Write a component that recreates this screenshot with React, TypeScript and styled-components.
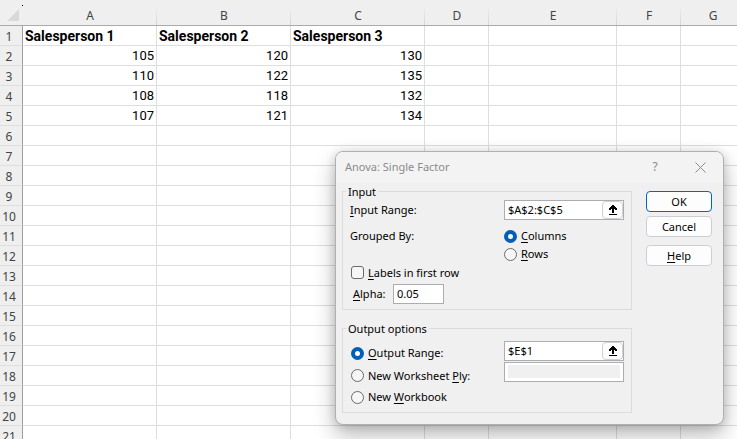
import React, { useState } from "react";
import styled, { createGlobalStyle } from "styled-components";

const GlobalStyle = createGlobalStyle`
  * { box-sizing: border-box; }
  html, body, #root { height: 100%; }
  body { margin: 0; background: #fff; overflow: hidden; }
`;

const UI_FONT = '"Noto Sans", "Open Sans", sans-serif';

const Workbook = styled.main`
  position: relative;
  height: 100%;
  overflow: hidden;
  background: #fff;
`;

const Sheet = styled.table`
  table-layout: fixed;
  width: max-content;
  border-collapse: separate;
  border-spacing: 0;
`;

const Column = styled.col<{ $width: number }>`
  width: ${(p) => p.$width}px;
`;

const Corner = styled.td`
  height: 26px;
  padding: 0 3px 3px 0;
  background: #efefef;
  border-bottom: 1px solid #ababab;
  vertical-align: bottom;
  text-align: right;

  svg { display: block; margin-left: auto; overflow: visible; }
`;

const ColumnHeader = styled.th`
  height: 26px;
  padding: 6px 0 0;
  background: linear-gradient(#efefef, #d4d4d4) right bottom / 1px 18px no-repeat #efefef;
  border-bottom: 1px solid #ababab;
  color: #444;
  font: 400 12px/18px ${UI_FONT};
  text-align: center;
`;

const RowHeader = styled.th`
  height: 20px;
  padding: 2px 4px 0 0;
  background: #efefef;
  border-right: 1px solid #9f9f9f;
  border-bottom: 1px solid #dedede;
  color: #444;
  font: 400 12px/17px ${UI_FONT};
  text-align: center;
`;

const Cell = styled.td<{ $heading?: boolean }>`
  height: 20px;
  padding: 1px 2px 0;
  border-right: 1px solid #dedede;
  border-bottom: 1px solid #dedede;
  color: #000;
  font: ${(p) => (p.$heading ? "700 14px/18px" : "400 13px/18px")} Roboto, sans-serif;
  text-align: ${(p) => (p.$heading ? "left" : "right")};
  white-space: nowrap;
`;

const Dialog = styled.section`
  position: absolute;
  top: 151px;
  left: 335px;
  border: 1px solid #b0b0b0;
  border-radius: 8px;
  background: #f0f0f0;
  box-shadow: 0 10px 22px rgba(0, 0, 0, 0.28), 0 1px 10px rgba(0, 0, 0, 0.14);
  color: #000;
  font: 400 11px/16px ${UI_FONT};
  overflow: hidden;
`;

const TitleBar = styled.header`
  display: flex;
  align-items: center;
  height: 30px;
  padding: 0 11px 0 9px;
  background: #f3f3f3;
  color: #8b8b8b;
`;

const Title = styled.h1`
  flex: 1;
  margin: 0;
  font: inherit;
`;

const TitleButton = styled.button`
  display: grid;
  place-items: center;
  width: 24px;
  height: 24px;
  margin-left: 21px;
  padding: 0;
  border: 0;
  background: none;
  color: #8b8b8b;
  font: 400 12px/16px ${UI_FONT};
`;

const DialogBody = styled.form`
  display: flex;
  gap: 14px;
  padding: 2px 11px 11px 6px;
`;

const Groups = styled.div`
  display: flex;
  flex-direction: column;
  gap: 11px;
`;

const Group = styled.fieldset`
  width: 290px;
  margin: 0;
  padding: 0 7px 5px;
  border: 1px solid #dcdcdc;
`;

const Legend = styled.legend`
  height: 15px;
  margin-left: -4px;
  padding: 0 2px;
  line-height: 16px;
`;

const Row = styled.div<{ $top?: number }>`
  display: grid;
  grid-template-columns: 1fr 120px;
  margin-top: ${(p) => p.$top ?? 0}px;
`;

const RowLabel = styled.label`
  line-height: 20px;
`;

const GroupCaption = styled.span`
  line-height: 18px;
`;

const Choice = styled.label<{ $height: number }>`
  display: flex;
  align-items: center;
  gap: 4px;
  height: ${(p) => p.$height}px;
  white-space: nowrap;
`;

const Radio = styled.input.attrs({ type: "radio" })`
  appearance: none;
  flex: none;
  width: 13px;
  height: 13px;
  margin: 0;
  border: 1px solid #6a6a6a;
  border-radius: 50%;
  background: #f6f6f6;

  &:checked {
    border: 4px solid #005fb8;
    background: #fff;
  }
`;

const CheckBox = styled.input.attrs({ type: "checkbox" })`
  appearance: none;
  flex: none;
  width: 13px;
  height: 13px;
  margin: 0;
  border: 1px solid #6a6a6a;
  border-radius: 3px;
  background: #f6f6f6;

  &:checked { background: #005fb8; }
`;

const Indent = styled.div<{ $top?: number }>`
  padding: ${(p) => p.$top ?? 0}px 0 0 1px;
`;

const AlphaRow = styled.div`
  display: grid;
  grid-template-columns: 40px 51px;
  margin-top: 2px;
  padding-left: 3px;
`;

const Field = styled.div<{ $inset?: boolean }>`
  display: flex;
  height: 20px;
  padding: ${(p) => (p.$inset ? "2px 3px 3px" : "0")};
  border: 1px solid #abadb3;
  background: #fff;
`;

const TextInput = styled.input`
  flex: 1;
  min-width: 0;
  width: 100%;
  padding: 0 0 0 3px;
  border: 0;
  outline: 0;
  background: #fff;
  color: #000;
  font: 400 11px/16px ${UI_FONT};

  &:disabled { background: #f0f0f0; }
`;

const PickButton = styled.button`
  display: grid;
  place-items: center;
  width: 21px;
  height: 18px;
  padding: 0;
  border: 1px solid #d0d0d0;
  border-radius: 4px;
  background: #fdfdfd;
`;

const FieldStack = styled.div`
  display: flex;
  flex-direction: column;
  gap: 1px;
`;

const Actions = styled.div`
  display: flex;
  flex-direction: column;
  gap: 4px;
  width: 66px;
  padding-top: 7px;
`;

const ActionButton = styled.button<{ $primary?: boolean; $apart?: boolean }>`
  height: 21px;
  margin-top: ${(p) => (p.$apart ? 4 : 0)}px;
  padding: 0;
  border: 1px solid ${(p) => (p.$primary ? "#0067c0" : "#cbcfd4")};
  border-radius: 4px;
  background: #fdfdfd;
  color: #000;
  font: 400 11px/18px ${UI_FONT};
`;

const Key = styled.u`
  text-underline-offset: 2px;
`;

const columns = [
  { name: "A", width: 134 },
  { name: "B", width: 134 },
  { name: "C", width: 134 },
  { name: "D", width: 64 },
  { name: "E", width: 128 },
  { name: "F", width: 64 },
  { name: "G", width: 64 },
];

const data: (string | number)[][] = [
  ["Salesperson 1", "Salesperson 2", "Salesperson 3"],
  [105, 120, 130],
  [110, 122, 135],
  [108, 118, 132],
  [107, 121, 134],
];

const rowNumbers = Array.from({ length: 21 }, (_, i) => i + 1);

function PickRange({ label }: { label: string }) {
  return (
    <PickButton type="button" aria-label={label}>
      <svg width="8" height="10" viewBox="0 0 8 10" shapeRendering="crispEdges">
        <path d="M3 0h2v1h1v1h1v1h1v2H6V4H5v4H3V4H2v1H0V3h1V2h1V1h1z" />
        <path d="M0 9h8v1H0z" />
      </svg>
    </PickButton>
  );
}

function Grid() {
  return (
    <Sheet>
      <colgroup>
        <Column $width={23} />
        {columns.map((c) => (
          <Column key={c.name} $width={c.width} />
        ))}
      </colgroup>
      <thead>
        <tr>
          <Corner>
            <svg width="20" height="17" viewBox="0 0 20 17">
              <path d="M19 4v12H7z" fill="#d9d9d9" />
              <path d="M22 0h1v1h-1z" fill="#000" />
            </svg>
          </Corner>
          {columns.map((c) => (
            <ColumnHeader key={c.name} scope="col">
              {c.name}
            </ColumnHeader>
          ))}
        </tr>
      </thead>
      <tbody>
        {rowNumbers.map((n) => (
          <tr key={n}>
            <RowHeader scope="row">{n}</RowHeader>
            {columns.map((c, i) => (
              <Cell key={c.name} $heading={n === 1}>
                {data[n - 1]?.[i]}
              </Cell>
            ))}
          </tr>
        ))}
      </tbody>
    </Sheet>
  );
}

function AnovaDialog() {
  const [inputRange, setInputRange] = useState("$A$2:$C$5");
  const [outputRange, setOutputRange] = useState("$E$1");
  const [alpha, setAlpha] = useState("0.05");
  const [output, setOutput] = useState("range");

  return (
    <Dialog role="dialog" aria-labelledby="anova-title">
      <TitleBar>
        <Title id="anova-title">Anova: Single Factor</Title>
        <TitleButton type="button">?</TitleButton>
        <TitleButton type="button" aria-label="Close">
          <svg width="11" height="11" viewBox="0 0 11 11" fill="none" stroke="currentColor">
            <path d="M.5.5l10 10M10.5.5l-10 10" />
          </svg>
        </TitleButton>
      </TitleBar>
      <DialogBody onSubmit={(e) => e.preventDefault()}>
        <Groups>
          <Group>
            <Legend>Input</Legend>
            <Row $top={1}>
              <RowLabel htmlFor="input-range">
                <Key>I</Key>nput Range:
              </RowLabel>
              <Field>
                <TextInput id="input-range" value={inputRange} onChange={(e) => setInputRange(e.target.value)} />
                <PickRange label="Select input range" />
              </Field>
            </Row>
            <Row $top={7} role="radiogroup" aria-labelledby="grouped-by">
              <GroupCaption id="grouped-by">Grouped By:</GroupCaption>
              <div>
                <Choice $height={18}>
                  <Radio name="grouped" defaultChecked />
                  <span>
                    <Key>C</Key>olumns
                  </span>
                </Choice>
                <Choice $height={18}>
                  <Radio name="grouped" />
                  <span>
                    <Key>R</Key>ows
                  </span>
                </Choice>
              </div>
            </Row>
            <Indent>
              <Choice $height={19}>
                <CheckBox />
                <span>
                  <Key>L</Key>abels in first row
                </span>
              </Choice>
            </Indent>
            <AlphaRow>
              <RowLabel htmlFor="alpha">
                <Key>A</Key>lpha:
              </RowLabel>
              <Field>
                <TextInput id="alpha" value={alpha} onChange={(e) => setAlpha(e.target.value)} />
              </Field>
            </AlphaRow>
          </Group>
          <Group>
            <Legend>Output options</Legend>
            <Row $top={5}>
              <Indent $top={1}>
                <Choice $height={22}>
                  <Radio name="output" checked={output === "range"} onChange={() => setOutput("range")} />
                  <span>
                    <Key>O</Key>utput Range:
                  </span>
                </Choice>
                <Choice $height={23}>
                  <Radio name="output" checked={output === "ply"} onChange={() => setOutput("ply")} />
                  <span>
                    New Worksheet <Key>P</Key>ly:
                  </span>
                </Choice>
                <Choice $height={20}>
                  <Radio name="output" checked={output === "book"} onChange={() => setOutput("book")} />
                  <span>
                    New <Key>W</Key>orkbook
                  </span>
                </Choice>
              </Indent>
              <FieldStack>
                <Field>
                  <TextInput
                    aria-label="Output Range"
                    value={outputRange}
                    onChange={(e) => setOutputRange(e.target.value)}
                  />
                  <PickRange label="Select output range" />
                </Field>
                <Field $inset>
                  <TextInput aria-label="New Worksheet Ply" disabled={output !== "ply"} />
                </Field>
              </FieldStack>
            </Row>
          </Group>
        </Groups>
        <Actions>
          <ActionButton type="submit" $primary>
            OK
          </ActionButton>
          <ActionButton type="button">Cancel</ActionButton>
          <ActionButton type="button" $apart>
            <Key>H</Key>elp
          </ActionButton>
        </Actions>
      </DialogBody>
    </Dialog>
  );
}

export default function App() {
  return (
    <Workbook>
      <GlobalStyle />
      <Grid />
      <AnovaDialog />
    </Workbook>
  );
}
